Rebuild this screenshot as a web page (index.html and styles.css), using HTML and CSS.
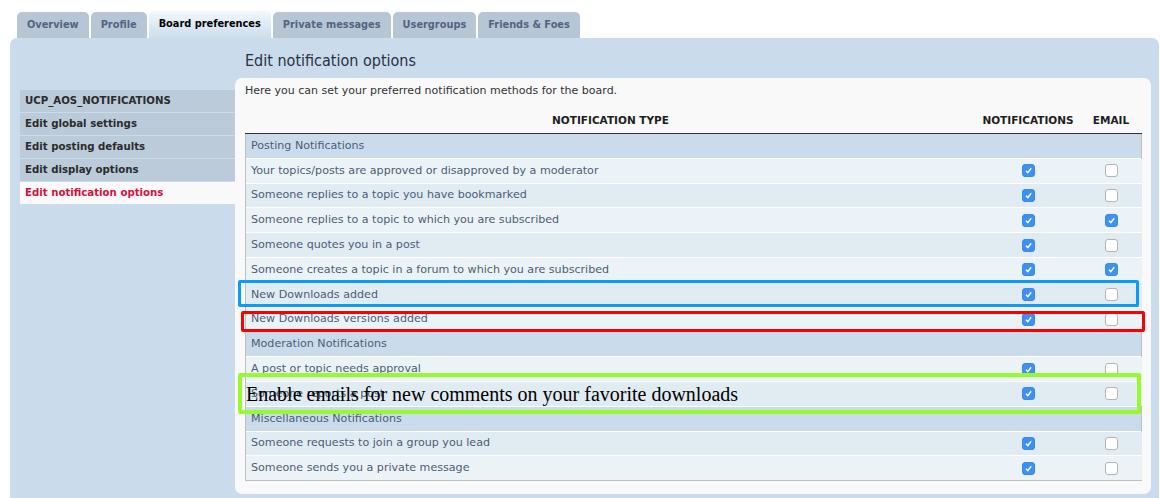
FILE: index.html
```html
<html>

<head>
    <title>User Control Panel - Board preferences</title>
    <link rel="stylesheet" href="styles.css">
</head>

<body>
    <div class="page">
        <ul class="tabs">
            <li class="tab">Overview</li>
            <li class="tab">Profile</li>
            <li class="tab active">Board preferences</li>
            <li class="tab">Private messages</li>
            <li class="tab">Usergroups</li>
            <li class="tab">Friends &amp; Foes</li>
        </ul>

        <div class="panel">
            <ul class="menu">
                <li>UCP_AOS_NOTIFICATIONS</li>
                <li>Edit global settings</li>
                <li>Edit posting defaults</li>
                <li>Edit display options</li>
                <li class="current">Edit notification options</li>
            </ul>

            <div class="main">
                <h2>Edit notification options</h2>
                <div class="content">
                    <p>Here you can set your preferred notification methods for the board.</p>
                    <table class="notify">
                        <colgroup>
                            <col>
                            <col class="col-n">
                            <col class="col-e">
                        </colgroup>
                        <thead>
                            <tr>
                                <th>Notification type</th>
                                <th>Notifications</th>
                                <th>Email</th>
                            </tr>
                        </thead>
                        <tbody>
                            <tr class="section"><td colspan="3">Posting Notifications</td></tr>
                            <tr class="bg1"><td>Your topics/posts are approved or disapproved by a moderator</td><td class="box"><span class="check on"></span></td><td class="box"><span class="check"></span></td></tr>
                            <tr class="bg2"><td>Someone replies to a topic you have bookmarked</td><td class="box"><span class="check on"></span></td><td class="box"><span class="check"></span></td></tr>
                            <tr class="bg1"><td>Someone replies to a topic to which you are subscribed</td><td class="box"><span class="check on"></span></td><td class="box"><span class="check on"></span></td></tr>
                            <tr class="bg2"><td>Someone quotes you in a post</td><td class="box"><span class="check on"></span></td><td class="box"><span class="check"></span></td></tr>
                            <tr class="bg1"><td>Someone creates a topic in a forum to which you are subscribed</td><td class="box"><span class="check on"></span></td><td class="box"><span class="check on"></span></td></tr>
                            <tr class="bg2"><td>New Downloads added</td><td class="box"><span class="check on"></span></td><td class="box"><span class="check"></span></td></tr>
                            <tr class="bg1"><td>New Downloads versions added</td><td class="box"><span class="check on"></span></td><td class="box"><span class="check"></span></td></tr>
                            <tr class="section"><td colspan="3">Moderation Notifications</td></tr>
                            <tr class="bg1"><td>A post or topic needs approval</td><td class="box"><span class="check on"></span></td><td class="box"><span class="check"></span></td></tr>
                            <tr class="bg2"><td>Someone reports a post</td><td class="box"><span class="check on"></span></td><td class="box"><span class="check"></span></td></tr>
                            <tr class="section"><td colspan="3">Miscellaneous Notifications</td></tr>
                            <tr class="bg2"><td>Someone requests to join a group you lead</td><td class="box"><span class="check on"></span></td><td class="box"><span class="check"></span></td></tr>
                            <tr class="bg1 last"><td>Someone sends you a private message</td><td class="box"><span class="check on"></span></td><td class="box"><span class="check"></span></td></tr>
                        </tbody>
                    </table>
                </div>
            </div>
        </div>

        <!-- annotations drawn over the screenshot -->
        <div class="mark mark-blue"></div>
        <div class="mark mark-red"></div>
        <div class="mark mark-green"></div>
        <div class="note">Enable emails for new comments on your favorite downloads</div>
    </div>
</body>

</html>
```

FILE: styles.css
```css
body {
    margin: 0;
    background: #fff;
    font-family: "DejaVu Sans", Verdana, sans-serif;
    font-size: 11px;
    color: #333;
}

ul {
    margin: 0;
    padding: 0;
}

li {
    list-style: none;
}

.page {
    position: relative;
    height: 498px;
    overflow: hidden;
}

/* tabs */

.tabs {
    display: flex;
    align-items: flex-end;
    gap: 2px;
    padding: 10px 0 0 17px;
    height: 28px;
}

.tab {
    height: 26px;
    line-height: 26px;
    padding: 0 10px;
    background: #b7c6d5;
    color: #536482;
    font-size: 9.8px;
    font-weight: bold;
    border-radius: 5px 5px 0 0;
}

.tab.active {
    position: relative;
    z-index: 1;
    height: 28px;
    line-height: 25px;
    margin-bottom: -1px;
    color: #000;
    background: linear-gradient(#f2f8fd, #cadceb);
}

/* panel */

.panel {
    display: flex;
    margin: 0 1px 0 10px;
    padding: 0 8px 10px 10px;
    background: #cadceb;
    border-radius: 7px;
}

.menu {
    width: 215px;
    padding-top: 52px;
    flex-shrink: 0;
}

.menu li {
    height: 22px;
    line-height: 22px;
    padding-left: 5px;
    margin-bottom: 1px;
    background: #bccbd9;
    color: #2b2b2b;
    font-size: 10.2px;
    font-weight: bold;
}

.menu li.current {
    background: #f9f9f9;
    color: #d31141;
}

.main {
    flex: 1;
}

.main h2 {
    margin: 0;
    padding: 13px 0 0 10px;
    height: 20px;
    margin-bottom: 7px;
    font-family: "DejaVu Sans Condensed", "DejaVu Sans", sans-serif;
    font-weight: normal;
    font-size: 16px;
    line-height: 20px;
    color: #28313f;
}

.content {
    background: #f9f9f9;
    border-radius: 7px;
    padding: 5px 9px 13px 10px;
}

.content p {
    margin: 0;
    line-height: 16px;
}

/* table */

.notify {
    width: 100%;
    margin-top: 8px;
    border-collapse: collapse;
    table-layout: fixed;
    font-size: 11.1px;
}

.notify .col-n {
    width: 105px;
}

.notify .col-e {
    width: 61px;
}

.notify th {
    padding: 5px 0 5px;
    line-height: 16px;
    text-transform: uppercase;
    font-size: 10.5px;
    font-weight: bold;
    color: #1e1e1e;
    border-bottom: 1px solid #333;
    white-space: nowrap;
}

.notify td {
    height: 24.8px;
    padding: 0 0 0 5px;
    border-top: 1px solid #fff;
    color: #4c5d77;
    line-height: 14px;
}

.notify td.box {
    padding: 0;
    text-align: center;
}

.notify tr td:first-child {
    border-left: 1px solid #b9c0c7;
}

.notify tbody tr:first-child td {
    border-top: 0;
}

.bg1 td {
    background: #ecf3f7;
}

.bg2 td {
    background: #e1ebf2;
}

.section td {
    background: #cadceb;
    border-right: 1px solid #b9c0c7;
}

.last td {
    border-bottom: 1px solid #b9c0c7;
}

.check {
    display: inline-block;
    vertical-align: middle;
    width: 11px;
    height: 11px;
    border: 1px solid #b3b3b3;
    border-radius: 3px;
    background: #fff;
}

.check.on {
    border-color: #3a8ae8;
    background: #3d90f5 url("data:image/svg+xml,%3Csvg xmlns='http://www.w3.org/2000/svg' width='11' height='11'%3E%3Cpath d='M3 5.8 L4.8 7.6 L8.2 3.3' fill='none' stroke='%23fff' stroke-width='1.5'/%3E%3C/svg%3E") no-repeat center;
}

/* annotations */

.mark {
    position: absolute;
    box-sizing: border-box;
    border-radius: 2px;
}

.mark-blue {
    left: 238px;
    top: 280px;
    width: 901px;
    height: 27px;
    border: 3px solid #0c9bfc;
}

.mark-red {
    left: 241px;
    top: 311px;
    width: 904px;
    height: 21px;
    border: 3px solid #fb0000;
}

.mark-green {
    left: 238px;
    top: 373px;
    width: 903px;
    height: 41px;
    border: 4px solid #95fb2d;
}

.note {
    position: absolute;
    left: 246px;
    top: 382px;
    font-family: "Liberation Serif", "Times New Roman", serif;
    font-size: 20px;
    line-height: 24px;
    color: #000;
    white-space: nowrap;
}
```
